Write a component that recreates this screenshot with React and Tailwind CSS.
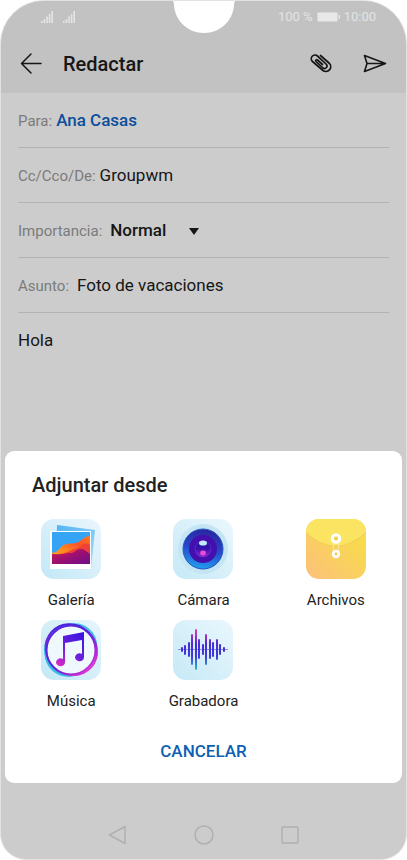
import { useState } from 'react';

const IconTile = ({ id, from, to, children }) => (
  <svg viewBox="0 0 60 60" className="w-15 h-15" aria-hidden="true">
    <defs>
      <linearGradient id={`${id}-bg`} x1="1" y1="0" x2="0" y2="1">
        <stop offset="0" stopColor={from} />
        <stop offset="1" stopColor={to} />
      </linearGradient>
    </defs>
    <rect width="60" height="60" rx="13" fill={`url(#${id}-bg)`} />
    {children}
  </svg>
);

const GalleryIcon = () => (
  <IconTile id="gallery" from="#eaf6fd" to="#c3e8f7">
    <defs>
      <linearGradient id="gallery-back" x1="0" y1="0" x2="1" y2="1">
        <stop offset="0" stopColor="#4fb4f3" />
        <stop offset="1" stopColor="#a5dbf9" />
      </linearGradient>
      <linearGradient id="gallery-orange" x1="0" y1="1" x2="1" y2="0">
        <stop offset="0" stopColor="#ffa81f" />
        <stop offset="0.4" stopColor="#ff8a1f" />
        <stop offset="0.7" stopColor="#ff5226" />
        <stop offset="1" stopColor="#ff7a20" />
      </linearGradient>
      <linearGradient id="gallery-purple" x1="0" y1="0" x2="1" y2="1">
        <stop offset="0" stopColor="#d0204f" />
        <stop offset="0.5" stopColor="#9c0f72" />
        <stop offset="1" stopColor="#6a128a" />
      </linearGradient>
    </defs>
    <path d="M16 6 54 11 50 50 15 40Z" fill="url(#gallery-back)" />
    <path d="M9 12h41v38H9z" fill="#fff" />
    <path d="M11 13h38v32H11z" fill="#35a4f5" />
    <path d="M11 34c6-1 7-4 10-7 4-3 9-2 14-3 6-2 8-7 14-7v28H11z" fill="url(#gallery-orange)" />
    <path d="M11 35c7 1 13-1 18-3 4-3 8-2 11-5 3-3 6-3 9-1v19H11z" fill="#ee4038" />
    <path d="M11 35c7 1 11 0 17-1 6 1 7-5 12-4 3 0 5 2 9 5v10H11z" fill="url(#gallery-purple)" />
  </IconTile>
);

const CameraIcon = () => (
  <IconTile id="camera" from="#eaf7fd" to="#c6e9f7">
    <defs>
      <linearGradient id="camera-ring" x1="0.6" y1="0" x2="0.4" y2="1">
        <stop offset="0" stopColor="#2b249c" />
        <stop offset="0.5" stopColor="#2946cc" />
        <stop offset="1" stopColor="#1fa0ee" />
      </linearGradient>
      <linearGradient id="camera-lens" x1="0" y1="0" x2="0" y2="1">
        <stop offset="0" stopColor="#171b9b" />
        <stop offset="0.5" stopColor="#3b10b0" />
        <stop offset="1" stopColor="#9c22cc" />
      </linearGradient>
    </defs>
    <circle cx="30" cy="30" r="25" fill="#c4e5f4" />
    <circle cx="30" cy="30" r="20" fill="url(#camera-ring)" stroke="#2558c4" />
    <circle cx="30" cy="30" r="14" fill="#4310ae" />
    <circle cx="30" cy="30" r="8" fill="url(#camera-lens)" stroke="#6a35d8" strokeWidth="0.6" />
    <ellipse cx="30" cy="24" rx="4" ry="2.6" fill="#c4e8ff" />
    <ellipse cx="30" cy="34" rx="2.8" ry="2.4" fill="#e052d8" />
  </IconTile>
);

const FilesIcon = () => (
  <IconTile id="files" from="#f6e23f" to="#fdc07c">
    <path d="M0 14C10 23 20 27 30 27s20-4 30-13v-1C60 6 54 0 47 0H13C6 0 0 6 0 13z" fill="#fbe462" />
    <path d="M0 14C10 23 20 27 30 27s20-4 30-13" fill="none" stroke="#f3cf55" strokeWidth="1.2" />
    <path d="M27 21c0 6 1 8 0 13M33 21c0 6-1 8 0 13" fill="none" stroke="#fdf0b0" strokeWidth="0.8" />
    <circle cx="30" cy="19.5" r="3.7" fill="#f5cd45" stroke="#fff" strokeWidth="3.2" />
    <circle cx="30" cy="35" r="2.8" fill="#f5cd45" stroke="#fff" strokeWidth="2.8" />
  </IconTile>
);

const MusicIcon = () => (
  <IconTile id="music" from="#e6f5fc" to="#c4e8f6">
    <defs>
      <linearGradient id="music-ring" x1="0" y1="0" x2="1" y2="1">
        <stop offset="0" stopColor="#5a2ae0" />
        <stop offset="0.5" stopColor="#5a22dc" />
        <stop offset="1" stopColor="#f02fd0" />
      </linearGradient>
      <linearGradient id="music-outer" gradientUnits="userSpaceOnUse" x1="20" y1="5" x2="52" y2="34">
        <stop offset="0" stopColor="#4a22dc" />
        <stop offset="1" stopColor="#e62fd4" />
      </linearGradient>
      <linearGradient id="music-note" gradientUnits="userSpaceOnUse" x1="42" y1="14" x2="16" y2="46">
        <stop offset="0" stopColor="#3c12e0" />
        <stop offset="0.5" stopColor="#6a20dc" />
        <stop offset="1" stopColor="#e02ac4" />
      </linearGradient>
    </defs>
    <ellipse cx="30" cy="30" rx="27" ry="24" transform="rotate(-48 30 30)" fill="none" stroke="#3fc0e6" strokeWidth="2" />
    <ellipse cx="29" cy="30" rx="25" ry="25.5" fill="none" stroke="#38b8e8" strokeWidth="2" />
    <ellipse cx="30" cy="29.5" rx="26.5" ry="24.5" transform="rotate(42 30 30)" fill="none" stroke="url(#music-outer)" strokeWidth="2" />
    <circle cx="30" cy="30" r="24.5" fill="#eef8fd" stroke="url(#music-ring)" strokeWidth="2" />
    <path d="M22 16 43 12V37a4.5 4 0 1 1-2-3V20l-17 3V42a4.5 4 0 1 1-2-3z" fill="url(#music-note)" />
  </IconTile>
);

// [x, top, bottom] of each bar in the sound wave
const waveBars = [
  [9, 27, 32], [12, 25, 35], [16, 22, 37], [19, 14, 45], [23, 9, 50], [26, 19, 39],
  [30, 24, 35], [33, 14, 45], [37, 19, 39], [40, 22, 37], [44, 19, 40], [47, 24, 35], [51, 27, 32],
];

const RecorderIcon = () => (
  <IconTile id="recorder" from="#eaf7fd" to="#c6e9f7">
    <defs>
      <linearGradient id="recorder-wave" gradientUnits="userSpaceOnUse" x1="0" y1="9" x2="0" y2="51">
        <stop offset="0" stopColor="#e53fb4" />
        <stop offset="0.35" stopColor="#4a2bd6" />
        <stop offset="0.65" stopColor="#4038d8" />
        <stop offset="1" stopColor="#2fc6cf" />
      </linearGradient>
    </defs>
    <path d="M5 29.5h50" stroke="#7a7ce8" strokeWidth="0.8" />
    {waveBars.map(([x, top, bottom]) => (
      <rect key={x} x={x - 1} y={top} width="2" height={bottom - top} rx="1" fill="url(#recorder-wave)" />
    ))}
  </IconTile>
);

const SignalIcon = () => (
  <svg viewBox="0 0 12 12" className="w-3 h-3" fill="#e4e4e4" aria-hidden="true">
    <path d="M0 10h1.6v2H0zM2.6 8h1.6v4H2.6zM5.2 5.5h1.6V12H5.2zM7.8 3h1.6v9H7.8zM10.4 0H12v12h-1.6z" />
  </svg>
);

const sources = [
  { name: 'Galería', Icon: GalleryIcon },
  { name: 'Cámara', Icon: CameraIcon },
  { name: 'Archivos', Icon: FilesIcon },
  { name: 'Música', Icon: MusicIcon },
  { name: 'Grabadora', Icon: RecorderIcon },
];

const rowClass = 'flex items-center h-[55px] pt-0.5 border-b border-[#b3b3b3]';
const labelClass = 'shrink-0 text-[15px] text-[#7b7b7b]';
const inputClass = 'flex-1 min-w-0 bg-transparent text-[17px] text-[#161616] focus:outline-none';

export default function App() {
  const [to, setTo] = useState('Ana Casas');
  const [from, setFrom] = useState('Groupwm');
  const [priority, setPriority] = useState('Normal');
  const [subject, setSubject] = useState('Foto de vacaciones');
  const [message, setMessage] = useState('Hola');

  return (
    <div className="min-h-screen bg-white font-['Roboto',sans-serif]">
      <div className="relative flex flex-col min-h-screen overflow-hidden rounded-t-[44px] rounded-b-[26px] border border-[#e2e2e2] bg-[#cccccc]">
        {/* Notch */}
        <svg viewBox="0 0 68 34" className="absolute -top-px left-1/2 -translate-x-1/2 w-[68px] h-[34px]" aria-hidden="true">
          <path d="M0 0h68c-3 0-4 2-4 5C63 21 50 33 34 33S5 21 4 5C4 2 3 0 0 0z" fill="#fff" />
        </svg>

        <header className="bg-[#c2c2c2]">
          <div className="flex items-center justify-between h-8 pl-10 pr-7.5 text-[13px] text-[#e4e4e4]">
            <div className="flex gap-2.5">
              <SignalIcon />
              <SignalIcon />
            </div>
            <div className="flex items-center gap-1">
              <span>100 %</span>
              <svg viewBox="0 0 23 10" className="w-[23px] h-2.5" aria-hidden="true">
                <rect x="0.5" y="0.5" width="20" height="9" rx="1" fill="#e8e8e8" stroke="#d6d6d6" />
                <path d="M21.5 3H23v4h-1.5z" fill="#e4e4e4" />
              </svg>
              <span>10:00</span>
            </div>
          </div>
          <div className="flex items-center h-[60px] pt-0.5 pl-[18px] pr-[19px]">
            <button type="button" aria-label="Atrás" className="mr-5">
              <svg viewBox="0 0 24 24" className="w-6 h-6" fill="none" stroke="#161616" strokeWidth="1.5" strokeLinecap="round" strokeLinejoin="round">
                <path d="M22 11.5H2.5M12 2 2.5 11.5 12 21" />
              </svg>
            </button>
            <h1 className="flex-1 text-xl font-medium text-[#161616]">Redactar</h1>
            <button type="button" aria-label="Adjuntar" className="mr-7.5">
              <svg viewBox="0 0 24 24" className="w-6 h-6" fill="none" stroke="#161616" strokeWidth="1.7" strokeLinecap="round" strokeLinejoin="round">
                <path d="M11.5 3.5 20.5 11.5A4.8 4.8 0 0 1 14 18.5L3.5 9.5A3.7 3.7 0 0 1 8.5 4L17.5 12.5A2.5 2.5 0 0 1 14 16L7 9.500A0.8 0.8 0 0 1 8.500 8L13.500 12.500" />
              </svg>
            </button>
            <button type="button" aria-label="Enviar">
              <svg viewBox="0 0 24 24" className="w-6 h-6" fill="none" stroke="#161616" strokeWidth="1.6" strokeLinejoin="round">
                <path d="M1.5 3.5 22.5 11.5 1.5 19.5 4 11.5zM4 11.5h18" />
              </svg>
            </button>
          </div>
        </header>

        <main className="flex flex-col flex-1 px-[17px]">
          <div className={rowClass}>
            <label htmlFor="to" className={`${labelClass} mr-1`}>Para:</label>
            <input id="to" value={to} onChange={(e) => setTo(e.target.value)} className="flex-1 min-w-0 bg-transparent text-[17px] font-medium text-[#0c4f9c] focus:outline-none" />
          </div>
          <div className={rowClass}>
            <label htmlFor="from" className={`${labelClass} mr-1`}>Cc/Cco/De:</label>
            <input id="from" value={from} onChange={(e) => setFrom(e.target.value)} className={inputClass} />
          </div>
          <div className={rowClass}>
            <label htmlFor="priority" className={`${labelClass} mr-2`}>Importancia:</label>
            <div className="relative flex items-center">
              <select id="priority" value={priority} onChange={(e) => setPriority(e.target.value)} className="appearance-none bg-transparent pr-8 text-[17px] font-medium text-[#161616] focus:outline-none">
                <option>Alta</option>
                <option>Normal</option>
                <option>Baja</option>
              </select>
              <svg viewBox="0 0 10 7" className="absolute right-0 w-2.5 h-[7px] pointer-events-none" fill="#161616" aria-hidden="true">
                <path d="M0 0h10L5 7z" />
              </svg>
            </div>
          </div>
          <div className={rowClass}>
            <label htmlFor="subject" className={`${labelClass} mr-2`}>Asunto:</label>
            <input id="subject" value={subject} onChange={(e) => setSubject(e.target.value)} className={inputClass} />
          </div>
          <textarea aria-label="Mensaje" value={message} onChange={(e) => setMessage(e.target.value)} className="flex-1 min-h-20 pt-[15px] bg-transparent text-[17px] leading-6 text-[#161616] resize-none focus:outline-none" />
        </main>

        {/* Attachment sheet */}
        <section className="mx-1 pt-5 pb-4 rounded-[9px] bg-white">
          <h2 className="px-[27px] text-xl leading-7 font-medium text-[#222222]">Adjuntar desde</h2>
          <div className="grid grid-cols-3 gap-y-2.5 mt-5">
            {sources.map(({ name, Icon }) => (
              <button key={name} type="button" className="flex flex-col items-center gap-[11px] text-[15px] leading-5 text-[#222222]">
                <Icon />
                {name}
              </button>
            ))}
          </div>
          <div className="flex justify-center mt-6">
            <button type="button" className="px-4 py-1 text-[17px] leading-6 font-medium text-[#0f5fb5]">CANCELAR</button>
          </div>
        </section>

        <nav className="flex items-center justify-center gap-[66px] h-[76px] pt-7">
          <button type="button" aria-label="Volver">
            <svg viewBox="0 0 20 20" className="w-5 h-5" fill="none" stroke="#b0b0b0" strokeWidth="1.5" strokeLinejoin="round">
              <path d="M17 1.5v17L1.5 10z" />
            </svg>
          </button>
          <button type="button" aria-label="Inicio">
            <svg viewBox="0 0 20 20" className="w-5 h-5" fill="none" stroke="#b0b0b0" strokeWidth="1.5">
              <circle cx="10" cy="10" r="9" />
            </svg>
          </button>
          <button type="button" aria-label="Recientes">
            <svg viewBox="0 0 20 20" className="w-5 h-5" fill="none" stroke="#b0b0b0" strokeWidth="1.5">
              <rect x="2" y="2" width="16" height="16" rx="1" />
            </svg>
          </button>
        </nav>
      </div>
    </div>
  );
}
